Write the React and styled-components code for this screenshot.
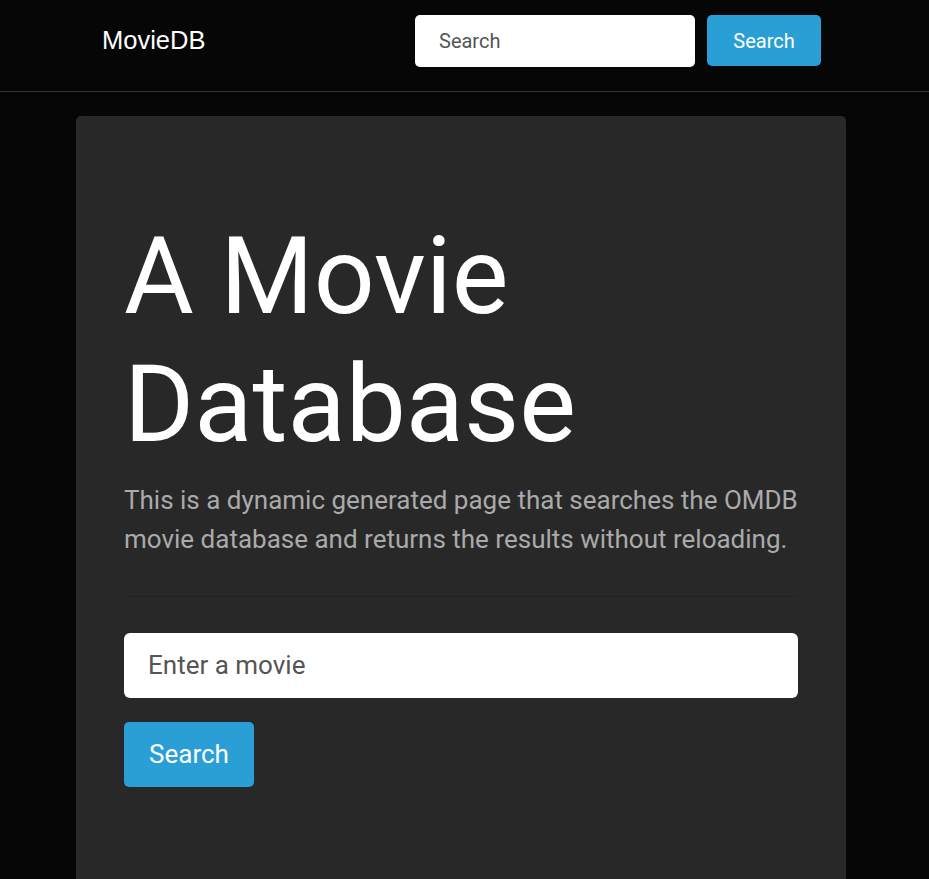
import React from "react";
import styled, { createGlobalStyle } from "styled-components";

const Global = createGlobalStyle`
  html, body { margin: 0; padding: 0; background: #060606; }
  body { font-family: Roboto, "Noto Sans", sans-serif; color: #888; }
  * { box-sizing: border-box; }
`;

const Navbar = styled.nav`
  height: 92px;
  border-bottom: 1px solid #333;
  background: #060606;
  display: flex;
  align-items: center;
  justify-content: space-between;
  padding: 0 108px 10px 102px;
`;

const Brand = styled.a`
  font-family: "Liberation Sans", Arial, sans-serif;
  font-size: 25.5px;
  color: #fff;
  text-decoration: none;
  line-height: 1;
`;

const NavForm = styled.form`
  display: flex;
  align-items: center;
  gap: 12px;
`;

const Input = styled.input`
  font-family: Roboto, sans-serif;
  font-size: ${(p) => (p.$lg ? "26px" : "20px")};
  height: ${(p) => (p.$lg ? "65px" : "52px")};
  width: ${(p) => (p.$lg ? "100%" : "280px")};
  padding: 0 24px;
  border: none;
  border-radius: ${(p) => (p.$lg ? "6px" : "5px")};
  background: #fff;
  color: #333;
  outline: none;
  display: block;
  &::placeholder { color: #555; opacity: 1; }
`;

const Button = styled.button`
  font-family: Roboto, sans-serif;
  font-size: ${(p) => (p.$lg ? "26px" : "20px")};
  height: ${(p) => (p.$lg ? "65px" : "51px")};
  padding: 0 24px;
  width: ${(p) => (p.$lg ? "130px" : "114px")};
  border: none;
  border-radius: 5px;
  background: #2a9fd6;
  color: #fff;
  cursor: pointer;
  display: block;
`;

const Main = styled.main`
  padding: 24px 0 0 76px;
`;

const Jumbotron = styled.section`
  width: 770px;
  background: #282828;
  border-radius: 5px;
  padding: 97px 48px 120px;
  min-height: 800px;
`;

const Title = styled.h1`
  margin: 0;
  font-size: 107px;
  font-weight: 400;
  line-height: 1.2;
  color: #fff;
`;

const Lead = styled.p`
  margin: 11px 0 0;
  font-size: 26px;
  font-weight: 400;
  line-height: 39px;
  color: #aaa;
`;

const Rule = styled.hr`
  margin: 37px 0 36px;
  border: none;
  border-top: 1px solid #222;
  height: 0;
`;

const SearchForm = styled.form`
  display: flex;
  flex-direction: column;
  align-items: flex-start;
  gap: 24px;
`;

export default function App() {
  return (
    <>
      <Global />
      <Navbar>
        <Brand href="#">MovieDB</Brand>
        <NavForm onSubmit={(e) => e.preventDefault()}>
          <Input placeholder="Search" />
          <Button type="submit">Search</Button>
        </NavForm>
      </Navbar>
      <Main>
        <Jumbotron>
          <Title>A Movie Database</Title>
          <Lead>
            This is a dynamic generated page that searches the OMDB movie database and returns the results without reloading.
          </Lead>
          <Rule />
          <SearchForm onSubmit={(e) => e.preventDefault()}>
            <Input $lg placeholder="Enter a movie" />
            <Button $lg type="submit">Search</Button>
          </SearchForm>
        </Jumbotron>
      </Main>
    </>
  );
}
